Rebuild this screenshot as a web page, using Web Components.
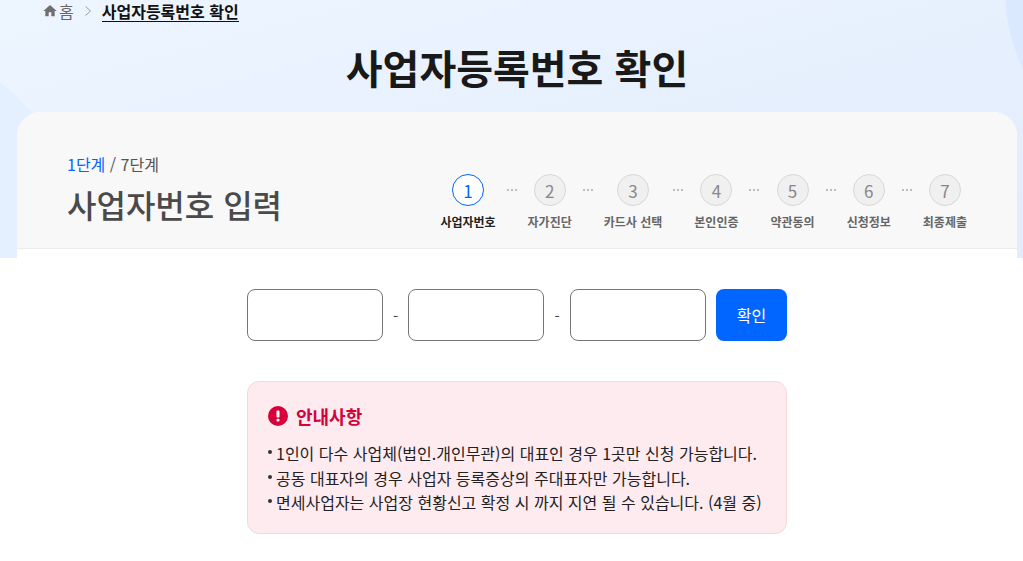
<!DOCTYPE html>
<html lang="ko">
<head>
<meta charset="utf-8">
<title>사업자등록번호 확인</title>
<style>
  html, body { margin: 0; padding: 0; background: #fff; overflow: hidden; height: 561px; }
  body { font-family: "Noto Sans CJK KR", "Noto Sans", sans-serif; color: #111; }
</style>
</head>
<body>
<apply-page>
  <page-crumbs slot="crumbs" current="사업자등록번호 확인"></page-crumbs>
  <span slot="title">사업자등록번호 확인</span>
  <step-card current="1" total="7" heading="사업자번호 입력">
    <step-item num="1" active>사업자번호</step-item>
    <step-item num="2">자가진단</step-item>
    <step-item num="3">카드사 선택</step-item>
    <step-item num="4">본인인증</step-item>
    <step-item num="5">약관동의</step-item>
    <step-item num="6">신청정보</step-item>
    <step-item num="7" last>최종제출</step-item>
    <biz-number slot="body"></biz-number>
    <notice-box slot="body" heading="안내사항">
      <li>1인이 다수 사업체(법인.개인무관)의 대표인 경우 1곳만 신청 가능합니다.</li>
      <li>공동 대표자의 경우 사업자 등록증상의 주대표자만 가능합니다.</li>
      <li>면세사업자는 사업장 현황신고 확정 시 까지 지연 될 수 있습니다. (4월 중)</li>
    </notice-box>
  </step-card>
</apply-page>

<script>
// Page frame: hero gradient, decorative circles and centered column
class ApplyPage extends HTMLElement {
  constructor() {
    super();
    this.attachShadow({ mode: 'open' });
    this.shadowRoot.innerHTML = `
      <style>
        :host { display: block; position: relative; height: 561px; overflow: hidden; }
        .bg {
          position: absolute; left: 0; top: 0; right: 0; height: 258px; overflow: hidden;
          background: linear-gradient(165deg, #edf5ff 0%, #e1ecfc 100%);
        }
        .c1 { position: absolute; left: -270px; top: 50px; width: 340px; height: 340px; border-radius: 50%; background: #e4efff; }
        .c2 { position: absolute; left: 1005px; top: -195px; width: 370px; height: 370px; border-radius: 50%; background: #dbe9fe; }
        .wrap { position: relative; width: 1000px; margin-left: 17px; }
        h1 {
          margin: 0; height: 90px; display: flex; align-items: center; justify-content: center;
          font-size: 40px; font-weight: 700; line-height: 1; color: #191919;
        }
      </style>
      <div class="bg"><div class="c1"></div><div class="c2"></div></div>
      <div class="wrap">
        <slot name="crumbs"></slot>
        <h1><slot name="title"></slot></h1>
        <slot></slot>
      </div>`;
  }
}

class PageCrumbs extends HTMLElement {
  constructor() {
    super();
    this.attachShadow({ mode: 'open' });
  }
  connectedCallback() {
    this.shadowRoot.innerHTML = `
      <style>
        :host { display: flex; align-items: center; height: 22px; padding-left: 25px; font-size: 16px; color: #666; line-height: 22px; }
        svg { display: block; }
        .home { margin-right: 1px; }
        .sep { margin: 0 10px 0 10px; }
        b { font-weight: 700; color: #111; border-bottom: 1px solid #111; line-height: 20px; }
      </style>
      <svg class="home" width="16" height="16" viewBox="0 0 24 24"><path fill="#6f6f6f" d="M10 20v-6h4v6h5v-8h3L12 3 2 12h3v8z"/></svg>
      <span>홈</span>
      <svg class="sep" width="8" height="12" viewBox="0 0 8 12"><path fill="none" stroke="#999" stroke-width="1" d="M1.5 1.5 6.5 6 1.5 10.500"/></svg>
      <b>${this.getAttribute('current')}</b>`;
  }
}

// Main card with the step header and a white body
class StepCard extends HTMLElement {
  constructor() {
    super();
    this.attachShadow({ mode: 'open' });
  }
  connectedCallback() {
    this.shadowRoot.innerHTML = `
      <style>
        :host { display: block; background: #fff; border-radius: 24px 24px 0 0; overflow: hidden; }
        .head {
          box-sizing: border-box; height: 137px; padding: 0 50px;
          display: flex; justify-content: space-between;
          background: #f8f8f8; border-bottom: 1px solid #ececec;
        }
        .count { margin-top: 41px; font-size: 16px; line-height: 22px; color: #555; }
        .count em { font-style: normal; color: #0066ff; }
        h2 { margin: 6px 0 0; font-size: 32px; font-weight: 500; line-height: 46px; color: #4a4a4a; }
        .steps { display: flex; gap: 32px; margin-top: 62px; align-items: flex-start; }
        .body { display: flex; flex-direction: column; align-items: center; gap: 40px; padding-top: 40px; }
      </style>
      <div class="head">
        <div>
          <div class="count"><em>${this.getAttribute('current')}단계</em> / ${this.getAttribute('total')}단계</div>
          <h2>${this.getAttribute('heading')}</h2>
        </div>
        <div class="steps"><slot></slot></div>
      </div>
      <div class="body"><slot name="body"></slot></div>`;
  }
}

class StepItem extends HTMLElement {
  constructor() {
    super();
    this.attachShadow({ mode: 'open' });
  }
  connectedCallback() {
    const active = this.hasAttribute('active');
    const last = this.hasAttribute('last');
    this.shadowRoot.innerHTML = `
      <style>
        :host { display: flex; flex-direction: column; align-items: center; position: relative; }
        .num {
          box-sizing: border-box; width: 32px; height: 32px; border-radius: 50%;
          display: flex; align-items: center; justify-content: center;
          font-size: 17px; line-height: 1;
          border: 1px solid ${active ? '#0066ff' : '#d8d8d8'};
          background: ${active ? '#fff' : '#f0f0f0'};
          color: ${active ? '#0066ff' : '#888'};
        }
        .label { margin-top: 7px; font-size: 12px; line-height: 18px; font-weight: 700; white-space: nowrap; color: ${active ? '#222' : '#666'}; }
        .dots { position: absolute; right: -21px; top: 15px; width: 10px; display: flex; justify-content: space-between; }
        .dots i { width: 2px; height: 2px; background: #aaa; border-radius: 50%; }
      </style>
      <div class="num">${this.getAttribute('num')}</div>
      <div class="label"><slot></slot></div>
      ${last ? '' : '<div class="dots"><i></i><i></i><i></i></div>'}`;
  }
}

// Three part business number input with confirm button
class BizNumber extends HTMLElement {
  constructor() {
    super();
    this.attachShadow({ mode: 'open' });
    this.shadowRoot.innerHTML = `
      <style>
        :host { display: flex; align-items: center; width: 540px; height: 52px; font-size: 15px; color: #444; }
        input {
          box-sizing: border-box; width: 136px; height: 52px; padding: 0 10px;
          border: 1px solid #767676; border-radius: 8px; background: #fff; outline: none;
        }
        .dash { width: 25px; text-align: center; }
        .dash + input + .dash { width: 26px; }
        button {
          width: 71px; height: 52px; margin-left: 10px; border: 0; border-radius: 8px;
          background: #0066ff; color: #fff; font: 400 16px "Noto Sans CJK KR", sans-serif;
        }
      </style>
      <input type="text"><span class="dash">-</span>
      <input type="text"><span class="dash">-</span>
      <input type="text">
      <button type="button">확인</button>`;
  }
}

class NoticeBox extends HTMLElement {
  constructor() {
    super();
    this.attachShadow({ mode: 'open' });
  }
  connectedCallback() {
    this.shadowRoot.innerHTML = `
      <style>
        :host {
          display: block; box-sizing: border-box; width: 540px; height: 153px; padding: 19px 20px;
          background: #feebef; border: 1px solid #f8d5da; border-radius: 12px;
        }
        .title { display: flex; align-items: center; gap: 8px; height: 30px; font-size: 18px; font-weight: 700; color: #d6003a; }
        .list { margin-top: 10px; font-size: 16px; line-height: 24.500px; color: #222; }
        ::slotted(li) { list-style: none; white-space: nowrap; position: relative; padding-left: 8px; }
        ::slotted(li)::before {
          content: ""; position: absolute; left: 0; top: 9px;
          width: 4px; height: 4px; border-radius: 50%; background: #333;
        }
      </style>
      <div class="title">
        <svg width="20" height="20" viewBox="0 0 20 20">
          <circle cx="10" cy="10" r="10" fill="#d6003a"/>
          <rect x="8.500" y="4.500" width="3" height="7" rx="1" fill="#fff"/>
          <rect x="8.500" y="12.800" width="3" height="2.800" rx="1" fill="#fff"/>
        </svg>
        <span>${this.getAttribute('heading')}</span>
      </div>
      <div class="list"><slot></slot></div>`;
  }
}

customElements.define('apply-page', ApplyPage);
customElements.define('page-crumbs', PageCrumbs);
customElements.define('step-card', StepCard);
customElements.define('step-item', StepItem);
customElements.define('biz-number', BizNumber);
customElements.define('notice-box', NoticeBox);
</script>
</body>
</html>
